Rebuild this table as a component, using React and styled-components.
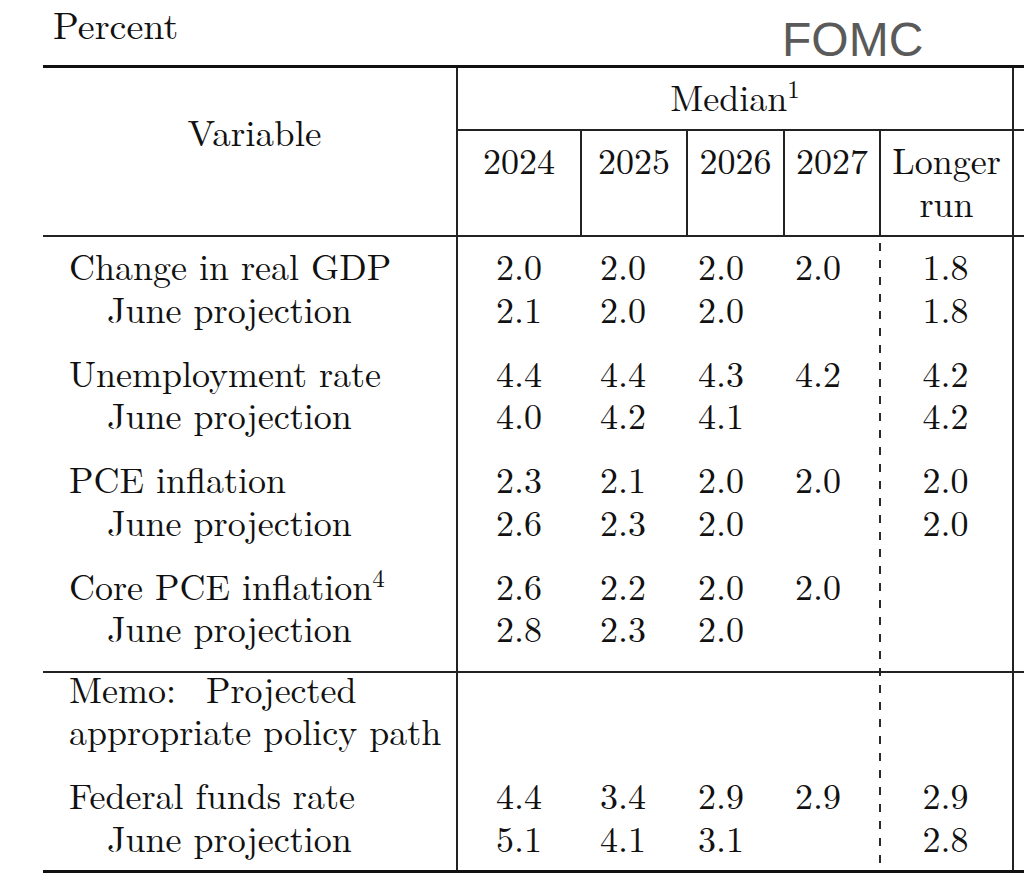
import React from "react";
import styled, { createGlobalStyle, css } from "styled-components";

const COLS = "413px 124px 106px 97px 96px 133px 200px";

const GlobalStyle = createGlobalStyle`
  *, *::before, *::after { box-sizing: border-box; }
  html, body { margin: 0; padding: 0; background: #fff; }
`;

const Root = styled.div`
  width: 1024px;
  height: 883px;
  overflow: hidden;
  background: #fff;
  color: #111;
  font-family: "Latin Modern Roman", "Liberation Serif", serif;
  font-size: 36px;
`;

const Caption = styled.div`
  display: grid;
  grid-template-columns: 729px auto;
  align-items: start;
  height: 65px;
  padding-left: 53px;
`;

const CaptionLabel = styled.div`
  font-size: 38px;
  line-height: 46px;
`;

const Brand = styled.div`
  font-family: "Liberation Sans", Arial, sans-serif;
  font-size: 48px;
  line-height: 1;
  color: #5a5a5a;
  padding-top: 16px;
  white-space: nowrap;
`;

const Table = styled.div`
  margin-left: 43px;
  width: 1171px;
  border-top: 3px solid #111;
`;

const Header = styled.div`
  display: grid;
  grid-template-columns: ${COLS};
  grid-template-rows: 63px 104px;
  border-bottom: 2px solid #222;
`;

const VariableHead = styled.div`
  grid-column: 1;
  grid-row: 1 / 3;
  text-align: center;
  padding-top: 42px;
  padding-left: 10px;
  line-height: 42.5px;
  font-size: 37px;
`;

const GroupHead = styled.div`
  grid-column: ${(p) => p.$col};
  grid-row: 1;
  border-left: 2px solid #222;
  border-bottom: 2px solid #222;
  line-height: 55px;
  text-align: center;
  white-space: nowrap;
`;

const YearHead = styled.div`
  grid-column: ${(p) => p.$col};
  grid-row: 2;
  border-left: 2px solid #222;
  padding-top: 7px;
  line-height: 42.5px;
  text-align: center;
`;

const Body = styled.div`
  display: grid;
  grid-template-columns: ${COLS};
  grid-template-rows: repeat(${(p) => p.$rows}, auto);
  border-bottom: 3px solid #111;
`;

const Rule = styled.div`
  grid-column: ${(p) => p.$col};
  grid-row: 1 / -1;
  ${(p) =>
    p.$dashed
      ? css`
          background: repeating-linear-gradient(
              to bottom,
              #2a2a2a 0 8px,
              transparent 8px 17px
            )
            left 6px / 2px 100% no-repeat;
        `
      : css`
          border-left: 2px solid #222;
        `}
`;

const Label = styled.div`
  grid-column: 1;
  grid-row: ${(p) => p.$row};
  padding-left: ${(p) => (p.$indent ? 64 : 26)}px;
  padding-top: ${(p) => p.$top || 0}px;
  padding-bottom: ${(p) => p.$bottom || 0}px;
  line-height: 42.5px;
  white-space: nowrap;
`;

const MemoLabel = styled(Label)`
  line-height: 42px;
  margin-top: -6px;
`;

const Num = styled.div`
  grid-column: ${(p) => p.$col};
  grid-row: ${(p) => p.$row};
  padding-left: ${(p) => p.$pad}px;
  padding-top: ${(p) => p.$top || 0}px;
  text-align: ${(p) => (p.$center ? "center" : "left")};
  line-height: 42.5px;
  white-space: nowrap;
`;

const Separator = styled.div`
  grid-column: 1 / -1;
  grid-row: ${(p) => p.$row};
  height: 2px;
  background: #222;
`;

const Sup = styled.sup`
  font-size: 25px;
  line-height: 0;
  vertical-align: 13px;
`;

const NUM_COLS = [
  { col: 2, pad: 40 },
  { col: 3, pad: 20 },
  { col: 4, pad: 12 },
  { col: 5, pad: 12 },
  { col: 6, pad: 0, center: true },
];

const YEARS = ["2024", "2025", "2026", "2027"];

const groups = [
  {
    label: "Change in real GDP",
    values: ["2.0", "2.0", "2.0", "2.0", "1.8"],
    june: ["2.1", "2.0", "2.0", "", "1.8"],
  },
  {
    label: "Unemployment rate",
    values: ["4.4", "4.4", "4.3", "4.2", "4.2"],
    june: ["4.0", "4.2", "4.1", "", "4.2"],
  },
  {
    label: "PCE inflation",
    values: ["2.3", "2.1", "2.0", "2.0", "2.0"],
    june: ["2.6", "2.3", "2.0", "", "2.0"],
  },
  {
    label: "Core PCE inflation",
    sup: "4",
    values: ["2.6", "2.2", "2.0", "2.0", ""],
    june: ["2.8", "2.3", "2.0", "", ""],
  },
];

const policy = {
  label: "Federal funds rate",
  values: ["4.4", "3.4", "2.9", "2.9", "2.9"],
  june: ["5.1", "4.1", "3.1", "", "2.8"],
};

function buildRows() {
  const rows = [];
  groups.forEach((g, i) => {
    rows.push({
      type: "data",
      label: g.label,
      sup: g.sup,
      values: g.values,
      top: i === 0 ? 7 : 21.5,
    });
    rows.push({
      type: "data",
      label: "June projection",
      indent: true,
      values: g.june,
      bottom: i === groups.length - 1 ? 22.5 : 0,
    });
  });
  rows.push({ type: "sep" });
  rows.push({ type: "memo" });
  rows.push({
    type: "data",
    label: policy.label,
    values: policy.values,
    top: 22.25,
  });
  rows.push({
    type: "data",
    label: "June projection",
    indent: true,
    values: policy.june,
    bottom: 11.75,
  });
  return rows;
}

function BodyRow({ row, index }) {
  const r = index + 1;
  if (row.type === "sep") return <Separator $row={r} />;
  if (row.type === "memo")
    return (
      <MemoLabel $row={r}>
        Memo:&nbsp; Projected
        <br />
        appropriate policy path
      </MemoLabel>
    );
  return (
    <>
      <Label $row={r} $indent={row.indent} $top={row.top} $bottom={row.bottom}>
        {row.label}
        {row.sup && <Sup>{row.sup}</Sup>}
      </Label>
      {NUM_COLS.map((c, k) =>
        row.values[k] ? (
          <Num
            key={k}
            $row={r}
            $col={c.col}
            $pad={c.pad}
            $center={c.center}
            $top={row.top}
          >
            {row.values[k]}
          </Num>
        ) : null
      )}
    </>
  );
}

export default function App() {
  const rows = buildRows();
  return (
    <Root>
      <GlobalStyle />
      <Caption>
        <CaptionLabel>Percent</CaptionLabel>
        <Brand>FOMC</Brand>
      </Caption>
      <Table>
        <Header>
          <VariableHead>Variable</VariableHead>
          <GroupHead $col="2 / 7">
            Median<Sup>1</Sup>
          </GroupHead>
          <GroupHead $col="7" />
          {YEARS.map((y, i) => (
            <YearHead key={y} $col={i + 2}>
              {y}
            </YearHead>
          ))}
          <YearHead $col={6}>
            Longer
            <br />
            run
          </YearHead>
          <YearHead $col={7} />
        </Header>
        <Body $rows={rows.length}>
          <Rule $col={2} />
          <Rule $col={6} $dashed />
          <Rule $col={7} />
          {rows.map((row, i) => (
            <BodyRow key={i} row={row} index={i} />
          ))}
        </Body>
      </Table>
    </Root>
  );
}
